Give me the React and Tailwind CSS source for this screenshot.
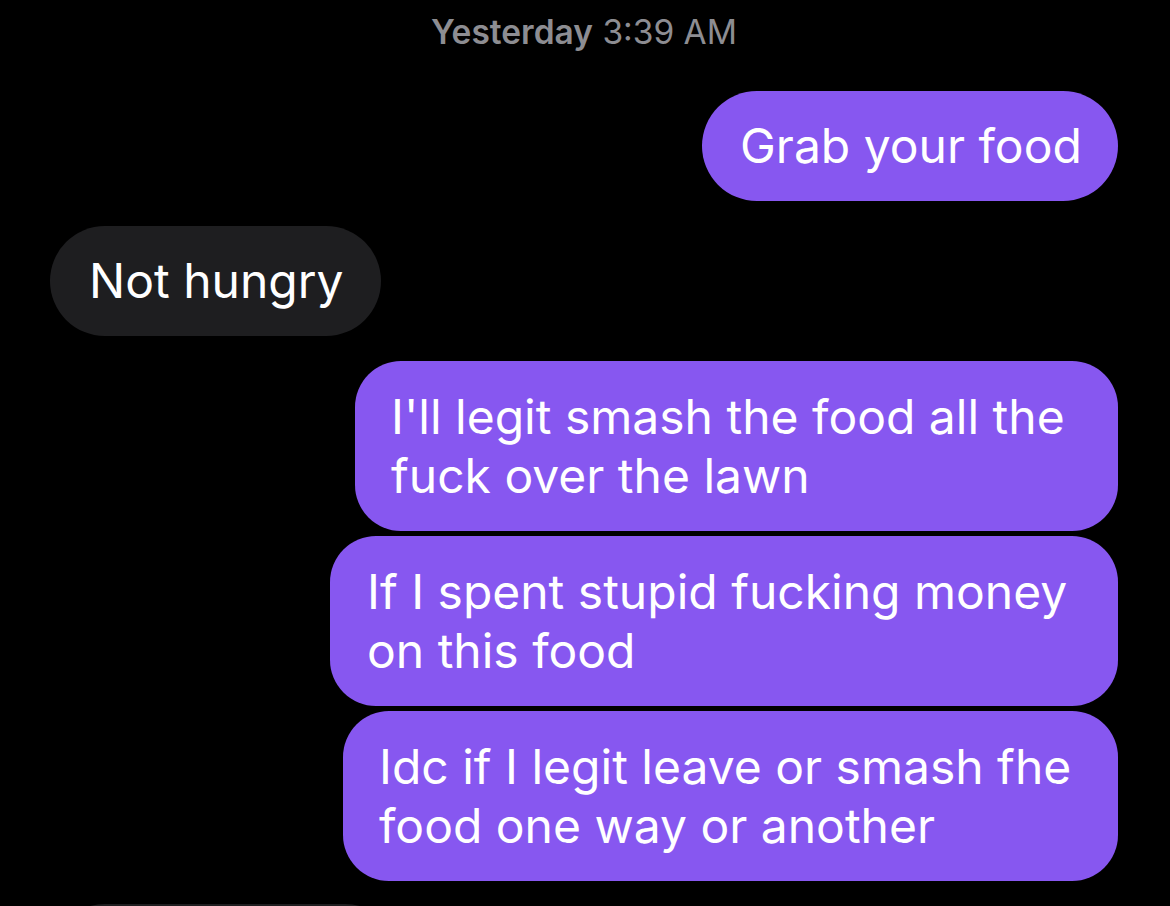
const purple = 'bg-[#8757f0]';

function Bubble({ side = 'right', gray = false, className = '', children }) {
  return (
    <div className={`flex ${side === 'right' ? 'justify-end' : 'justify-start'}`}>
      <div className={`${gray ? 'bg-[#1e1e20]' : purple} text-white ${className}`}>{children}</div>
    </div>
  );
}

export default function App() {
  return (
    <div
      className="h-[906px] overflow-hidden bg-black pl-[50px] pr-[52px] pt-[12px]"
      style={{ fontFamily: 'Inter, "Noto Sans", sans-serif' }}
    >
      <div className="text-center text-[33.5px] leading-[40px] text-[#8d8d92]">
        <span className="font-semibold">Yesterday</span> 3:39 AM
      </div>

      <div className="mt-[39px] flex flex-col">
        <Bubble className="w-[416px] rounded-[55px] py-[26px] pl-[38px] text-[48px] leading-[58px] whitespace-nowrap">
          Grab your food
        </Bubble>

        <div className="mt-[25px]">
          <Bubble side="left" gray className="w-[331px] rounded-[55px] py-[26px] pl-[39px] text-[48px] leading-[58px] whitespace-nowrap">
            Not hungry
          </Bubble>
        </div>

        <div className="mt-[25px] flex flex-col gap-[5px]">
          <Bubble className="w-[763px] rounded-[46px] py-[26px] pl-[36px] text-[48px] leading-[59px] whitespace-nowrap">
            I'll legit smash the food all the
            <br />
            fuck over the lawn
          </Bubble>
          <Bubble className="w-[788px] rounded-[46px] py-[26px] pl-[37px] text-[48px] leading-[59px] whitespace-nowrap">
            If I spent stupid fucking money
            <br />
            on this food
          </Bubble>
          <Bubble className="w-[775px] rounded-[46px] py-[26px] pl-[36px] text-[48px] leading-[59px] whitespace-nowrap">
            Idc if I legit leave or smash fhe
            <br />
            food one way or another
          </Bubble>
        </div>

        <div className="mt-[23px]">
          <Bubble side="left" gray className="h-[110px] w-[350px] rounded-[55px]" />
        </div>
      </div>
    </div>
  );
}
